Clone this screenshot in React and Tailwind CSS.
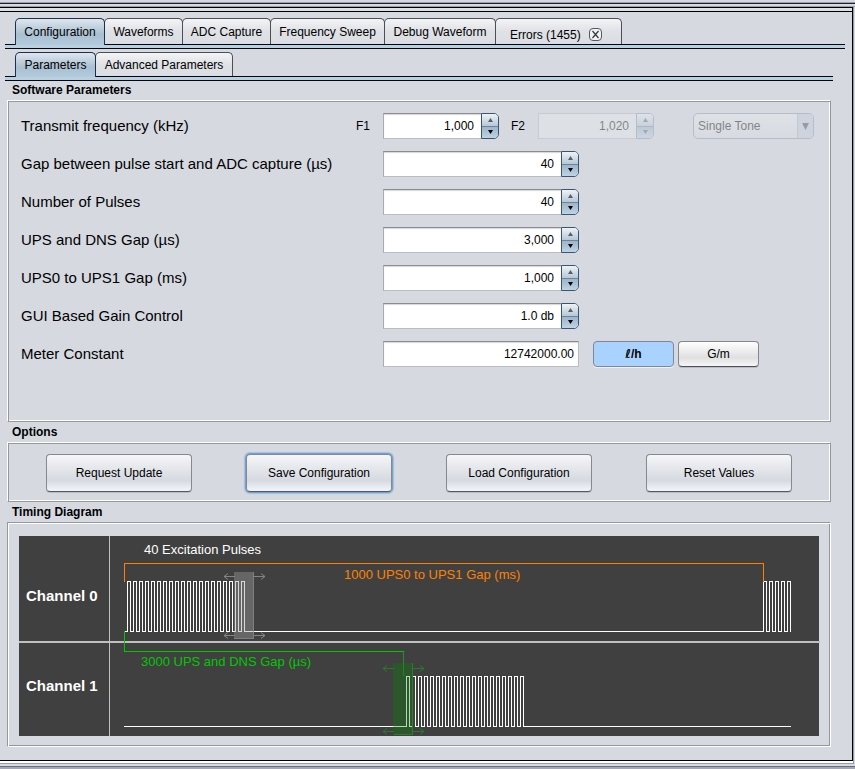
import { useState } from "react";

const mainTabs = [
  { name: "Configuration", width: "w-[90px]" },
  { name: "Waveforms", width: "w-[79px]" },
  { name: "ADC Capture", width: "w-[89px]" },
  { name: "Frequency Sweep", width: "w-[115px]" },
  { name: "Debug Waveform", width: "w-[112px]" },
];

const subTabs = [
  { name: "Parameters", width: "w-[81px]" },
  { name: "Advanced Parameters", width: "w-[138px]" },
];

const spinnerRows = [
  { id: "adcGap", label: "Gap between pulse start and ADC capture (µs)", value: "40" },
  { id: "pulses", label: "Number of Pulses", value: "40" },
  { id: "upsDns", label: "UPS and DNS Gap (µs)", value: "3,000" },
  { id: "ups0Ups1", label: "UPS0 to UPS1 Gap (ms)", value: "1,000" },
  { id: "gain", label: "GUI Based Gain Control", value: "1.0 db" },
];

const actions = ["Request Update", "Save Configuration", "Load Configuration", "Reset Values"];

function TabStrip({ tabs, active, onSelect, height, children }) {
  return (
    <div>
      <div role="tablist" className={`flex pl-[10px] ${height}`}>
        {tabs.map((tab, i) => (
          <button
            key={tab.name}
            role="tab"
            aria-selected={tab.name === active}
            onClick={() => onSelect(tab.name)}
            className={`${tab.width} shrink-0 whitespace-nowrap rounded-t-[5px] border border-b-0 text-center text-[12px] leading-[20px] ${i > 0 ? "-ml-px" : ""} ${
              tab.name === active
                ? "relative z-10 -mb-px border-[#1c3047] bg-linear-to-b from-[#dfe6ee] via-[#a9bfd2] via-60% to-[#b3cbdc]"
                : "border-[#4b4e55] bg-linear-to-b from-[#f3f4f6] via-[#dfe1e6] via-50% to-[#dadde3]"
            }`}
          >
            {tab.name}
          </button>
        ))}
        {children}
      </div>
      <div className="h-[5px] border-y border-[#05070f] bg-[#b9d0e1]" />
    </div>
  );
}

function Panel({ title, className, children }) {
  return (
    <section className="mr-[14px] ml-[2px]">
      <h2 className="pl-[5px] text-[12px] leading-[20px] font-bold">{title}</h2>
      <div
        className={`border border-t-white border-r-[#94979e] border-b-[#94979e] border-l-white shadow-[inset_1px_1px_0_#94979e,inset_-1px_-1px_0_#fff] ${className}`}
      >
        {children}
      </div>
    </section>
  );
}

function Arrow({ down, color }) {
  return (
    <svg width="5" height="4" viewBox="0 0 5 4" aria-hidden="true">
      <path d={down ? "M0 0H5L2.5 4Z" : "M0 4H5L2.5 0Z"} fill={color} />
    </svg>
  );
}

function Spinner({ id, value, width, disabled }) {
  return (
    <div className={`flex h-[26px] shrink-0 ${width} ${disabled ? "opacity-40" : ""}`}>
      <input
        id={id}
        defaultValue={value}
        disabled={disabled}
        className={`min-w-0 flex-1 border border-r-0 pr-[7px] text-right text-[12px] outline-none ${
          disabled
            ? "border-[#b4b8c0] bg-[#e9eeef]"
            : "border-t-[#8a8c92] border-b-[#b9bcc2] border-l-[#a9acb3] bg-white shadow-[inset_0_1px_1px_#d8d8d8]"
        }`}
      />
      <div
        className={`flex w-[18px] flex-col overflow-hidden rounded-r-[5px] border ${
          disabled ? "border-[#8795a5]" : "border-[#3c546d]"
        }`}
      >
        <button
          aria-label="Increase"
          disabled={disabled}
          className="flex flex-1 items-center justify-center border-b border-[#6d859b] bg-linear-to-b from-[#eef2f6] to-[#b5c8d7]"
        >
          <Arrow color="#5a5f66" />
        </button>
        <button
          aria-label="Decrease"
          disabled={disabled}
          className="flex flex-1 items-center justify-center bg-linear-to-b from-[#9db4ca] to-[#bcd4e4]"
        >
          <Arrow down color={disabled ? "#5a5f66" : "#000"} />
        </button>
      </div>
    </div>
  );
}

// square wave pulses, 3px high + 3px low
function pulseTrain(x, count, low, high) {
  let d = "";
  for (let i = 0; i < count; i++) {
    d += `V${high}H${x + i * 6 + 3}V${low}`;
    if (i < count - 1) d += `H${x + i * 6 + 6}`;
  }
  return d;
}

function DragArrows({ x, y, color }) {
  return (
    <path
      d={`M${x + 11} ${y}H${x}M${x + 4} ${y - 3}L${x} ${y}L${x + 4} ${y + 3}M${x + 30} ${y}H${x + 41}M${x + 37} ${y - 3}L${x + 41} ${y}L${x + 37} ${y + 3}`}
      fill="none"
      stroke={color}
    />
  );
}

function TimingDiagram() {
  return (
    <svg
      viewBox="0 0 800 200"
      role="img"
      aria-label="Timing Diagram"
      className="block w-full overflow-visible bg-[#404040] font-['Liberation_Sans',Arial,sans-serif]"
    >
      <g shapeRendering="crispEdges">
        <rect x="90" y="0" width="1" height="200" fill="#c0c0c0" />
        <rect x="0" y="105" width="801" height="2" fill="#c0c0c0" />
      </g>
      <g fill="none" stroke="#fff" shapeRendering="crispEdges">
        <path d={`M105 95.5H108.5${pulseTrain(108.5, 20, 95.5, 45.5)}H744.5${pulseTrain(744.5, 5, 95.5, 45.5)}`} />
        <path d={`M105 190.5H387.5${pulseTrain(387.5, 20, 190.5, 140.5)}H772`} />
      </g>
      <g fill="none" shapeRendering="crispEdges">
        <path d="M105.5 46V27.5H744.5V46" stroke="#ff8000" />
        <path d="M105.5 95V115.5H385" stroke="#00c800" />
        <path d="M384.5 116V140" stroke="#2b8a2b" />
      </g>

      {/* ADC capture windows */}
      <rect x="215" y="36" width="20" height="67" fill="#a0a0a0" fillOpacity="0.4" />
      <path d="M234.5 36V102.5H215" fill="none" stroke="#8a8a8a" strokeOpacity="0.7" />
      <DragArrows x={205} y={40.5} color="#858585" />
      <DragArrows x={205} y={99.5} color="#858585" />
      <rect x="374" y="127" width="20" height="72" fill="#008c00" fillOpacity="0.3" />
      <path d="M393.5 127V198.5H375" fill="none" stroke="#268026" />
      <DragArrows x={364} y={132.5} color="#2b782b" />
      <DragArrows x={364} y={195.5} color="#2b782b" />

      <g fontSize="15" fontWeight="700" fill="#fff">
        <text x="7" y="65">Channel 0</text>
        <text x="7" y="155">Channel 1</text>
      </g>
      <g fontSize="13">
        <text x="125" y="18" fill="#fff">40 Excitation Pulses</text>
        <text x="325" y="43" fill="#ff8000">1000 UPS0 to UPS1 Gap (ms)</text>
        <text x="122" y="130" fill="#00c800">3000 UPS and DNS Gap (µs)</text>
      </g>
    </svg>
  );
}

function App() {
  const [mainTab, setMainTab] = useState("Configuration");
  const [subTab, setSubTab] = useState("Parameters");
  const [unit, setUnit] = useState("lh");

  return (
    <div className="flex min-h-screen flex-col bg-[#d6d9e0] font-['Liberation_Sans',Arial,sans-serif] text-[12px] text-black">
      {/* Window edge */}
      <div className="mt-[2px] h-[2px] border-t border-b border-t-[#9a9dab] border-b-[#1d2230]" />
      <div className="mt-[2px] flex flex-1 flex-col border-t border-t-[#9a9dab] pr-px">
        <div className="flex flex-1 flex-col border-r border-r-[#9a9cab]">
          <div className="flex-1 border-t border-r border-b border-black">
            <div className="h-[4px] border-b border-black bg-[#dbe1e3]" />

            <div className="pt-[6px] pr-[7px] pl-[5px]">
              <TabStrip tabs={mainTabs} active={mainTab} onSelect={setMainTab} height="h-[26px]">
                <div className="-ml-px flex w-[127px] shrink-0 items-center rounded-t-[5px] border border-b-0 border-[#4b4e55] bg-linear-to-b from-[#f3f4f6] via-[#dfe1e6] via-50% to-[#dadde3] pt-[6px] pl-[14px]">
                  <button role="tab" aria-selected="false" className="leading-[16px] whitespace-nowrap">
                    Errors (1455)
                  </button>
                  <button aria-label="Close Errors" className="ml-[8px]">
                    <svg width="13" height="13" viewBox="0 0 13 13" aria-hidden="true">
                      <rect x="0.5" y="0.5" width="12" height="12" rx="3.5" fill="#f0f2f4" stroke="#55585e" />
                      <path d="M3.5 3L9.5 10M9.5 3L3.5 10" stroke="#33363b" strokeWidth="1.2" />
                    </svg>
                  </button>
                </div>
              </TabStrip>

              <div className="pt-[3px] pr-[12px]">
                <TabStrip tabs={subTabs} active={subTab} onSelect={setSubTab} height="h-[24px]" />
              </div>

              <div className="-mt-px">
                <Panel title="Software Parameters" className="flex flex-col gap-3 px-[13px] pt-[12px] pb-[54px]">
                  <div className="flex h-[26px] items-center">
                    <label htmlFor="f1" className="w-[335px] shrink-0 text-[15px]">
                      Transmit frequency (kHz)
                    </label>
                    <span className="w-[27px] shrink-0">F1</span>
                    <Spinner id="f1" value="1,000" width="w-[116px]" />
                    <label htmlFor="f2" className="w-[39px] shrink-0 pl-[12px]">
                      F2
                    </label>
                    <Spinner id="f2" value="1,020" width="w-[116px]" disabled />
                    <div className="relative ml-[39px] h-[26px] w-[121px] shrink-0 opacity-40">
                      <select
                        aria-label="Tone"
                        disabled
                        className="h-full w-full appearance-none rounded-[5px] border border-[#8795a5] bg-linear-to-b from-[#eceef0] to-[#dadde2] pl-[4px] text-[12px] text-black opacity-100"
                      >
                        <option>Single Tone</option>
                      </select>
                      <span className="pointer-events-none absolute inset-y-px right-px flex w-[16px] items-center justify-center rounded-r-[4px] border-l border-[#a3b1c0] bg-[#c3cedb]">
                        <svg width="7" height="7" viewBox="0 0 7 7" aria-hidden="true">
                          <path d="M0 0H7L3.5 7Z" fill="#3c4046" />
                        </svg>
                      </span>
                    </div>
                  </div>

                  {spinnerRows.map((row) => (
                    <div key={row.id} className="flex h-[26px] items-center">
                      <label htmlFor={row.id} className="w-[362px] shrink-0 text-[15px]">
                        {row.label}
                      </label>
                      <Spinner id={row.id} value={row.value} width="w-[196px]" />
                    </div>
                  ))}

                  <div className="flex h-[26px] items-center">
                    <label htmlFor="meter" className="w-[362px] shrink-0 text-[15px]">
                      Meter Constant
                    </label>
                    <input
                      id="meter"
                      defaultValue="12742000.00"
                      className="h-[26px] w-[196px] shrink-0 border border-t-[#8a8c92] border-r-[#b9bcc2] border-b-[#b9bcc2] border-l-[#a9acb3] bg-white pr-[4px] text-right text-[12px] shadow-[inset_0_1px_1px_#d8d8d8] outline-none"
                    />
                    <button
                      aria-pressed={unit === "lh"}
                      onClick={() => setUnit("lh")}
                      className="ml-[14px] h-[26px] w-[81px] shrink-0 rounded-[4px] border border-[#7f8894] bg-[#a9d2ff] text-[12px] font-bold shadow-[0_1px_0_#eef0f4]"
                    >
                      <span className="font-['DejaVu_Sans',sans-serif] italic">ℓ</span>/h
                    </button>
                    <button
                      aria-pressed={unit === "gm"}
                      onClick={() => setUnit("gm")}
                      className="ml-[4px] h-[26px] w-[81px] shrink-0 rounded-[4px] border border-[#85878c] border-b-[#4d5056] bg-linear-to-b from-white via-[#e0e0e2] via-65% to-[#f6f6f6] text-[12px] shadow-[0_1px_0_#b9bcc4]"
                    >
                      G/m
                    </button>
                  </div>
                </Panel>

                <Panel title="Options" className="flex justify-between px-[38px] pt-[11px] pb-[9px]">
                  {actions.map((name) => (
                    <button
                      key={name}
                      className={`h-[38px] w-[146px] rounded-[4px] border border-[#85888e] border-b-[#55585e] bg-linear-to-b from-[#f5f6f8] via-[#d6d9e0] via-70% to-[#f2f5fb] text-[12px] ${
                        name === "Save Configuration"
                          ? "shadow-[0_0_0_1px_#73a4d1,0_0_1px_2px_#a5bfdb]"
                          : "shadow-[0_1px_0_#b9bcc4]"
                      }`}
                    >
                      {name}
                    </button>
                  ))}
                </Panel>

                <section className="mr-[14px] mb-[13px] ml-[2px]">
                  <h2 className="pl-[5px] text-[12px] leading-[20px] font-bold">Timing Diagram</h2>
                  <div className="border border-t-[#94979e] border-r-white border-b-white border-l-[#94979e] px-[11px] pt-[13px] pb-[10px] shadow-[inset_1px_1px_0_#fff,inset_-1px_-1px_0_#94979e]">
                    <TimingDiagram />
                  </div>
                </section>
              </div>
            </div>
          </div>
          <div className="h-[3px] border-b border-[#9a9cab] bg-white" />
        </div>
      </div>
      <div className="mt-[2px] h-[3px] border-t border-[#686e7d] bg-[#a3a7b5]" />
    </div>
  );
}

export default App;
